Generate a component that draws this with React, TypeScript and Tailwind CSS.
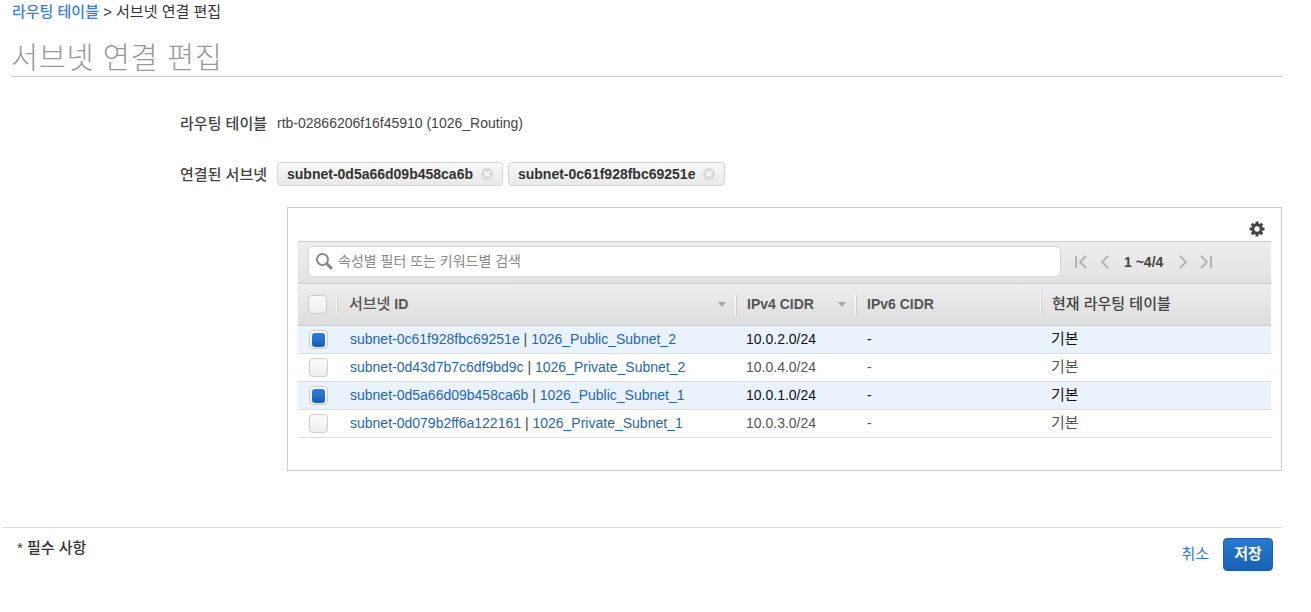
import React from "react";

const FONT = "font-['Liberation_Sans','Noto_Sans_CJK_KR',sans-serif]";

const rows = [
  { id: "subnet-0c61f928fbc69251e", name: "1026_Public_Subnet_2", cidr: "10.0.2.0/24", on: true },
  { id: "subnet-0d43d7b7c6df9bd9c", name: "1026_Private_Subnet_2", cidr: "10.0.4.0/24", on: false },
  { id: "subnet-0d5a66d09b458ca6b", name: "1026_Public_Subnet_1", cidr: "10.0.1.0/24", on: true },
  { id: "subnet-0d079b2ff6a122161", name: "1026_Private_Subnet_1", cidr: "10.0.3.0/24", on: false },
];

function Check({ on }: { on?: boolean }) {
  return (
    <span className="flex h-[19px] w-[19px] items-center justify-center rounded-[4px] border border-[#ccc] bg-gradient-to-b from-[#fafafa] to-[#eee]">
      {on && <span className="h-[14px] w-[13px] rounded-[3px] bg-gradient-to-b from-[#2f7fd6] to-[#1560b8]" />}
    </span>
  );
}

function Chip({ text }: { text: string }) {
  return (
    <span className="flex h-[24px] items-center gap-[7px] rounded-[4px] border border-[#d5d5d5] bg-gradient-to-b from-[#f8f8f8] to-[#e9e9e9] pl-[9px] pr-[8px] text-[14px] font-bold text-[#333]">
      {text}
      <svg width="14" height="14" viewBox="0 0 14 14">
        <circle cx="7" cy="7" r="6" fill="#d9d9d9" />
        <path d="M4.6 4.6l4.8 4.8M9.4 4.6l-4.8 4.8" stroke="#fff" strokeWidth="1.5" />
      </svg>
    </span>
  );
}

function Sep() {
  return <span className="h-[20px] w-px bg-[#fafafa] shadow-[1px_0_0_#ccc]" />;
}

function Caret() {
  return (
    <svg width="8" height="5" viewBox="0 0 8 5" className="shrink-0">
      <path d="M0 0h8L4 5z" fill="#a6a6a6" />
    </svg>
  );
}

function Pager({ d }: { d: string }) {
  return (
    <svg width="14" height="16" viewBox="0 0 14 16" fill="none" stroke="#b5b5b5" strokeWidth="2">
      <path d={d} />
    </svg>
  );
}

export default function App() {
  return (
    <div className={`${FONT} h-[612px] w-[1311px] overflow-hidden bg-white text-[14px] leading-[20px] text-[#444]`}>
      <div className="pl-[12px] pt-[3px] text-[15px] leading-[18px] text-[#333]">
        <span className="font-medium text-[#3b7fd4]">라우팅 테이블</span> &gt; 서브넷 연결 편집
      </div>

      <div className="ml-[11px] mr-[29px] mt-[19px] h-[37px] border-b border-[#ccc] text-[29.5px] font-light leading-[35px] tracking-[0.55px] text-[#999]">
        서브넷 연결 편집
      </div>

      <div className="mt-[34px] flex items-center">
        <div className="w-[267px] pt-[3px] text-right text-[15px] font-medium text-[#444]">라우팅 테이블</div>
        <div className="ml-[10px] text-[#444]">rtb-02866206f16f45910 (1026_Routing)</div>
      </div>

      <div className="mt-[28px] flex items-center">
        <div className="w-[267px] pt-[2px] text-right text-[15px] font-medium text-[#444]">연결된 서브넷</div>
        <div className="ml-[10px] flex gap-[5px]">
          <Chip text="subnet-0d5a66d09b458ca6b" />
          <Chip text="subnet-0c61f928fbc69251e" />
        </div>
      </div>

      <div className="ml-[287px] mr-[29px] mt-[21px] h-[264px] border border-[#ccc] px-[10px]">
        <div className="flex h-[33px] items-end justify-end pb-[4px] pr-[6px]">
          <svg width="16" height="16" viewBox="0 0 16 16" fill="none">
            <path
              d="M8 0.5V3M8 13v2.5M0.5 8H3M13 8h2.5M2.7 2.7l1.8 1.8M11.5 11.5l1.8 1.8M13.3 2.7l-1.8 1.8M4.5 11.5l-1.8 1.8"
              stroke="#444"
              strokeWidth="3"
            />
            <circle cx="8" cy="8" r="4.2" stroke="#444" strokeWidth="3" />
          </svg>
        </div>

        <div className="flex h-[43px] items-center border-y border-[#ccc] bg-gradient-to-b from-[#eee] to-[#e2e2e2] pb-[2px] pl-[10px]">
          <div className="flex h-[31px] w-[753px] items-center gap-[4px] rounded-[4px] border border-[#d5d5d5] bg-white pl-[6px] text-[14px] text-[#888]">
            <svg width="19" height="19" viewBox="0 0 19 19" fill="none" stroke="#888" className="shrink-0">
              <circle cx="7.5" cy="7.5" r="5.5" strokeWidth="2" />
              <path d="M11.5 11.5l5.5 5.5" strokeWidth="3" />
            </svg>
            <span className="pb-[2px]">속성별 필터 또는 키워드별 검색</span>
          </div>
          <div className="ml-[13px] flex items-center">
            <Pager d="M2 2v12M12 2L6 8l6 6" />
            <span className="ml-[10px]" />
            <Pager d="M10 2L4 8l6 6" />
            <span className="ml-[12px] w-[46px] whitespace-nowrap text-[14px] font-bold text-[#444]">1 ~4/4</span>
            <span className="ml-[6px]" />
            <Pager d="M4 2l6 6-6 6" />
            <span className="ml-[9px]" />
            <Pager d="M2 2l6 6-6 6M12 2v12" />
          </div>
        </div>

        <div className="grid h-[42px] grid-cols-[40px_398px_120px_185px_230px] items-center border-b border-[#ccc] bg-gradient-to-b from-[#eee] to-[#ddd] font-bold text-[#555]">
          <div className="flex items-center justify-between pl-[10px] pr-px">
            <Check />
            <Sep />
          </div>
          <div className="flex items-center justify-between pl-[11px]">
            <span className="pb-[2px]">
              <span className="text-[15px] font-medium">서브넷</span> ID
            </span>
            <span className="flex items-center gap-[9px]">
              <Caret />
              <Sep />
            </span>
          </div>
          <div className="flex items-center justify-between pl-[11px]">
            <span className="pb-[2px]">IPv4 CIDR</span>
            <span className="flex items-center gap-[9px]">
              <Caret />
              <Sep />
            </span>
          </div>
          <div className="flex items-center justify-between pl-[11px]">
            <span className="pb-[2px]">IPv6 CIDR</span>
            <Sep />
          </div>
          <div className="pb-[2px] pl-[11px] text-[15px] font-medium text-[#444]">현재 라우팅 테이블</div>
        </div>

        {rows.map((r) => (
          <div
            key={r.id}
            className={`grid h-[28px] grid-cols-[40px_398px_120px_185px_230px] items-center border-b border-[#ddd] ${
              r.on ? "bg-[#eaf2fc] text-[#111]" : "bg-white text-[#555]"
            }`}
          >
            <div className="pl-[11px]">
              <Check on={r.on} />
            </div>
            <div className="pb-[2px] pl-[12px] text-[#1f66b8]">
              {r.id} <span className="text-[#444]">|</span> {r.name}
            </div>
            <div className="pb-[2px] pl-[10px]">{r.cidr}</div>
            <div className="pb-[2px] pl-[11px]">-</div>
            <div className="pb-[2px] pl-[10px] text-[15px]">기본</div>
          </div>
        ))}
      </div>

      <div className="ml-[2px] mr-[29px] mt-[56px] flex h-[46px] items-start justify-between border-t border-[#ddd]">
        <span className="ml-[15px] mt-[10px] text-[15px] font-medium text-[#333]">* 필수 사항</span>
        <div className="mr-[9px] mt-[10px] flex items-center gap-[14px]">
          <span className="pb-[2px] text-[15px] text-[#2f78c8]">취소</span>
          <span className="flex h-[33px] w-[50px] items-center justify-center rounded-[4px] border border-[#1a5fb0] bg-gradient-to-b from-[#2a7bd0] to-[#1560b4] pb-[2px] text-[15px] font-bold text-white">
            저장
          </span>
        </div>
      </div>
    </div>
  );
}
